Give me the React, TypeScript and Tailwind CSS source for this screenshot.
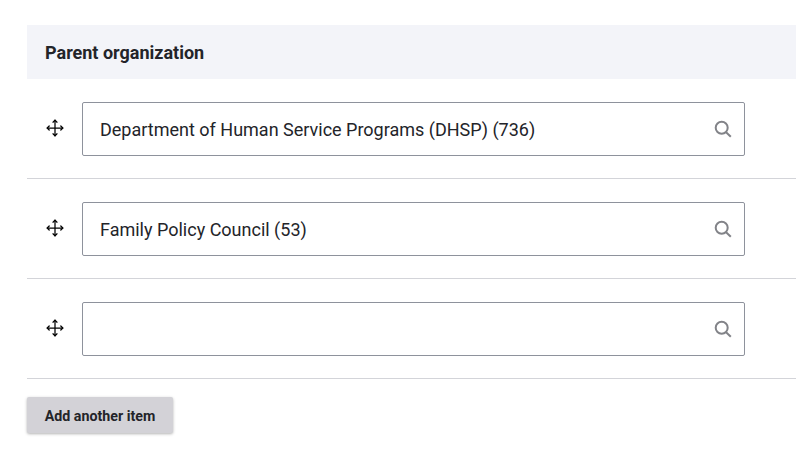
const rows = ["Department of Human Service Programs (DHSP) (736)", "Family Policy Council (53)", ""];

function Move() {
  return (
    <svg width="18" height="18" viewBox="0 0 18 18" fill="none" stroke="#000" strokeWidth="1.25" strokeLinecap="round" strokeLinejoin="round">
      <path d="M9 1.2V16.8M1.2 9H16.8" />
      <path d="M7 3.2L9 1.2L11 3.2M7 14.8L9 16.8L11 14.8M3.2 7L1.2 9L3.2 11M14.8 7L16.8 9L14.8 11" />
    </svg>
  );
}

function Search() {
  return (
    <svg width="18" height="18" viewBox="0 0 18 18" fill="none" stroke="#828388" strokeWidth="2">
      <circle cx="7.7" cy="7.7" r="6" />
      <path d="M11.8 12L16.8 16.8" />
    </svg>
  );
}

export default function App() {
  return (
    <div className="w-[796px] h-[457px] bg-white pt-[25px] pl-[27px] overflow-hidden font-['Roboto',sans-serif] text-[#232429]">
      <div className="h-[54px] bg-[#f3f4f9] pl-[18px] flex items-center text-[18px] font-bold">Parent organization</div>
      {rows.map((value, i) => (
        <div key={i} className="h-[100px] pt-[23px] border-b border-[#d3d4d9] flex items-start">
          <div className="w-[55px] h-[52px] pl-[19px] flex items-center shrink-0">
            <Move />
          </div>
          <div className="w-[663px] h-[54px] border border-[#8e929c] rounded-[2px] flex items-center justify-between pl-[17px] pr-[12px] text-[18px]">
            <span>{value}</span>
            <Search />
          </div>
        </div>
      ))}
      <button className="mt-[18px] h-[36px] w-[146px] flex items-center justify-center pt-[4px] bg-[#d3d2d7] rounded-[2px] shadow-[0_1px_3px_rgba(0,0,0,0.3)] text-[14.22px] font-bold text-[#232429]">Add another item</button>
    </div>
  );
}
